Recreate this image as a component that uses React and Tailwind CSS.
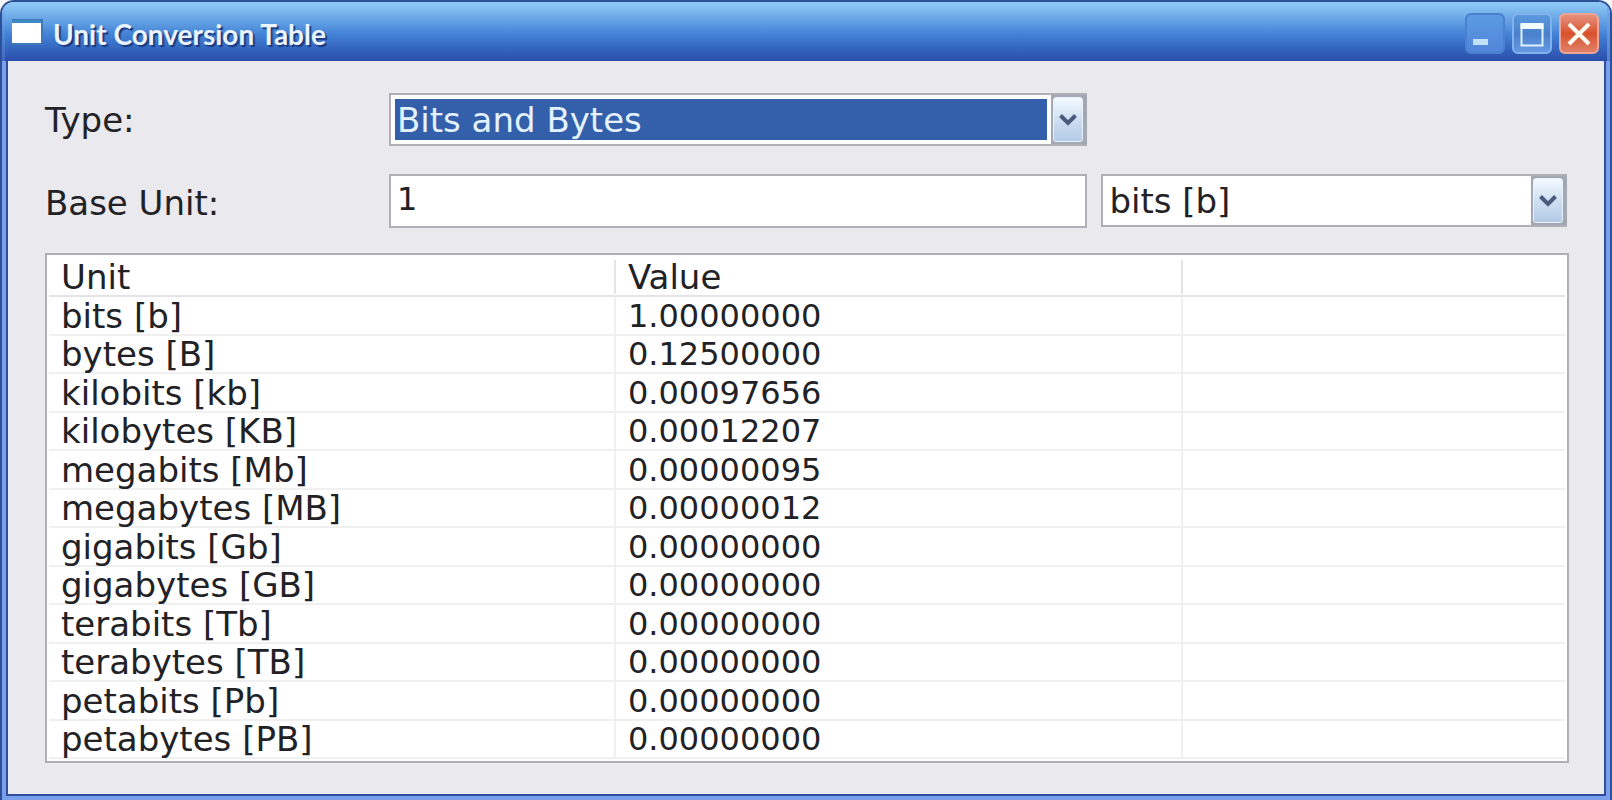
import { useState } from 'react'

const UNITS = [
  { name: 'bits [b]', bits: 1 },
  { name: 'bytes [B]', bits: 8 },
  { name: 'kilobits [kb]', bits: 1024 },
  { name: 'kilobytes [KB]', bits: 8 * 1024 },
  { name: 'megabits [Mb]', bits: 1024 ** 2 },
  { name: 'megabytes [MB]', bits: 8 * 1024 ** 2 },
  { name: 'gigabits [Gb]', bits: 1024 ** 3 },
  { name: 'gigabytes [GB]', bits: 8 * 1024 ** 3 },
  { name: 'terabits [Tb]', bits: 1024 ** 4 },
  { name: 'terabytes [TB]', bits: 8 * 1024 ** 4 },
  { name: 'petabits [Pb]', bits: 1024 ** 5 },
  { name: 'petabytes [PB]', bits: 8 * 1024 ** 5 },
]

// Arrow button at the right end of a combo box, the select below takes the clicks
function ComboArrow() {
  return (
    <span className="pointer-events-none col-start-2 row-start-1 flex items-center justify-center border-l-2 border-r-4 border-y-2 border-[#a3a8b2] bg-[#a3a8b2]">
      <span className="flex h-full w-full items-center justify-center rounded-[3px] border border-[#e6f1fb] bg-linear-to-b from-[#f4faff] via-[#cfe0f2] to-[#b4cae6]">
        <svg width="18" height="12" viewBox="0 0 18 12" fill="none" stroke="#4a5a7c" strokeWidth="4">
          <path d="M1.5 1.5 L9 9 L16.5 1.5" />
        </svg>
      </span>
    </span>
  )
}

function CaptionButton({ label, className, children }) {
  return (
    <button
      type="button"
      aria-label={label}
      className={`flex h-[41px] w-[40px] items-center justify-center rounded-md border-2 ${className}`}
    >
      {children}
    </button>
  )
}

function TitleBar() {
  return (
    <header className="flex h-[59px] items-center bg-linear-to-b from-[#8cc6f4] from-5% via-[#4382d6] via-55% to-[#294daa] pt-1 pr-[11px] pl-[10px] shadow-[inset_3px_0_0_#6f9ce855,inset_-3px_0_0_#6f9ce8aa]">
      <svg width="31" height="26" viewBox="0 0 31 26" className="mr-[10px] mb-1">
        <rect width="31" height="26" fill="#3f78b8" />
        <rect x="0" y="4" width="29" height="20" fill="#ffffff" />
        <rect x="0" y="1" width="29" height="3" fill="#3b8ac4" />
      </svg>
      <h1 className="flex-1 font-[Lato,sans-serif] text-[28px] leading-8 font-bold text-[#eaf4ff] [text-shadow:2px_2px_1px_#1c3a80]">
        Unit Conversion Table
      </h1>
      <div className="flex gap-[7px]">
        <CaptionButton label="Minimize" className="border-[#4a80cf] bg-linear-to-b from-[#5b9be2] to-[#5285d8]">
          <svg width="30" height="30" viewBox="0 0 30 30">
            <rect x="3" y="20" width="15" height="6" fill="#c0e2fb" />
          </svg>
        </CaptionButton>
        <CaptionButton label="Maximize" className="border-[#82b3ec] bg-linear-to-b from-[#5a9ade] via-[#4a80cc] to-[#6698e2]">
          <svg width="30" height="30" viewBox="0 0 30 30">
            <path d="M4.5 6 H25.5 V26.5 H4.5 Z" fill="none" stroke="#dff3ff" strokeWidth="2" />
            <rect x="3.5" y="4" width="23" height="6" fill="#f2fbff" />
          </svg>
        </CaptionButton>
        <CaptionButton label="Close" className="border-[#f0a493] bg-linear-to-b from-[#e5917c] via-[#d9512a] to-[#e08068]">
          <svg width="30" height="30" viewBox="0 0 30 30" fill="none" stroke="#fffaf2" strokeWidth="4">
            <path d="M5 5 L25 25 M25 5 L5 25" />
          </svg>
        </CaptionButton>
      </div>
    </header>
  )
}

export default function App() {
  const [amount, setAmount] = useState('1')
  const [base, setBase] = useState(UNITS[0].name)

  const baseBits = UNITS.find(u => u.name === base).bits
  const valueIn = (unit) => (((Number(amount) || 0) * baseBits) / unit.bits).toFixed(8)

  return (
    <div className="min-h-screen bg-[#f4f6f8] font-['DejaVu_Sans',sans-serif] text-[34px] leading-[38px] text-[#222226]">
      <div className="flex min-h-screen flex-col overflow-hidden rounded-t-[14px] border-x-2 border-t-2 border-[#2c5199]">
        <TitleBar />

        <div className="flex flex-1 flex-col border-x-4 border-b-4 border-[#7a9fec]">
          <main className="flex-1 border-x-2 border-b-2 border-[#2f4f9e] bg-[#eae9ed] pt-8 pr-[35px] pb-7 pl-[37px]">
            <form className="mr-[2px] grid grid-cols-[330px_3fr_2fr] gap-x-[14px] gap-y-7" onSubmit={e => e.preventDefault()}>
              <label htmlFor="type" className="pt-[8px]">Type:</label>
              <div className="grid h-[53px] grid-cols-[1fr_36px] border-2 border-r-0 border-[#b0afb5] bg-white">
                <select
                  id="type"
                  className="col-span-2 col-start-1 row-start-1 h-[49px] appearance-none bg-[#335fab] bg-clip-content py-1 pr-[40px] pl-1 indent-[2px] text-[#e4f2ff] outline-none"
                >
                  <option>Bits and Bytes</option>
                </select>
                <ComboArrow />
              </div>

              <label htmlFor="amount" className="col-start-1 pt-[10px]">Base Unit:</label>
              <input
                id="amount"
                value={amount}
                onChange={e => setAmount(e.target.value)}
                className="h-[54px] min-w-0 border-2 border-[#b0afb5] bg-white px-[6px] pb-1 text-[32px] outline-none"
              />
              <div className="grid h-[53px] grid-cols-[1fr_36px] border-2 border-r-0 border-[#b0afb5] bg-white">
                <select
                  aria-label="Base unit name"
                  value={base}
                  onChange={e => setBase(e.target.value)}
                  className="col-span-2 col-start-1 row-start-1 h-[49px] appearance-none bg-transparent pr-[40px] pl-[6px] outline-none"
                >
                  {UNITS.map(u => <option key={u.name}>{u.name}</option>)}
                </select>
                <ComboArrow />
              </div>
            </form>

            <div className="mt-[25px] border-2 border-[#b0afb5] bg-white px-[2px] pb-[2px]">
              <table className="w-full table-fixed border-separate border-spacing-0">
                <colgroup>
                  <col className="w-[37.4%]" />
                  <col className="w-[37.4%]" />
                  <col />
                </colgroup>
                <thead>
                  <tr className="h-[42px] text-left leading-[34px]">
                    <th className="border-b-2 border-[#e4e4e6] p-0 pt-1 font-normal">
                      <div className="border-r-2 border-[#e4e4e6] pl-3">Unit</div>
                    </th>
                    <th className="border-b-2 border-[#e4e4e6] p-0 pt-1 font-normal">
                      <div className="border-r-2 border-[#e4e4e6] pl-3">Value</div>
                    </th>
                    <th className="border-b-2 border-[#e4e4e6] p-0"></th>
                  </tr>
                </thead>
                <tbody>
                  {UNITS.map(u => (
                    <tr key={u.name} className="leading-[36px] odd:h-[39px] even:h-[38px]">
                      <td className="border-r-2 border-b-2 border-[#f0f0f1] p-0 pl-3">{u.name}</td>
                      <td className="border-r-2 border-b-2 border-[#f0f0f1] p-0 pl-3 text-[32px]">{valueIn(u)}</td>
                      <td className="border-b-2 border-[#f0f0f1] p-0"></td>
                    </tr>
                  ))}
                </tbody>
              </table>
            </div>
          </main>
        </div>
      </div>
    </div>
  )
}
